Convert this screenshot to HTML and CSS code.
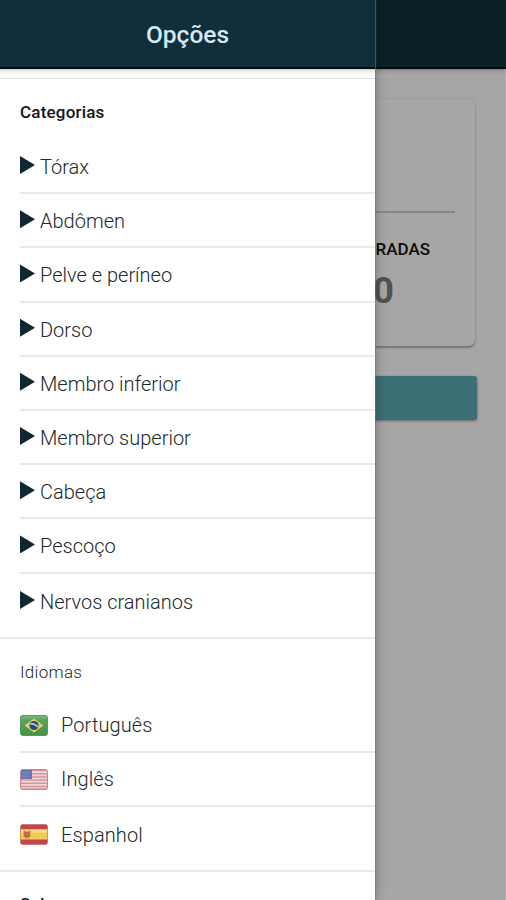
FILE: index.html
```html
<!DOCTYPE html>
<html lang="pt">
<head>
<meta charset="utf-8">
<title>Opções</title>
<link rel="stylesheet" href="styles.css">
</head>
<body>
<div class="app">
  <main class="page">
    <div class="page-bar"></div>
    <section class="card">
      <div class="card-top"></div>
      <div class="score">
        <span class="score-label">ERRADAS</span>
        <span class="score-value">0</span>
      </div>
    </section>
    <div class="button"></div>
  </main>
  <aside class="drawer">
    <header class="drawer-bar">Opções</header>
    <div class="strip"></div>
    <section class="group categories">
      <h2 class="heading strong">Categorias</h2>
      <ul class="list">
        <li class="item"><i class="arrow"></i><span>Tórax</span></li>
        <li class="item"><i class="arrow"></i><span>Abdômen</span></li>
        <li class="item"><i class="arrow"></i><span>Pelve e períneo</span></li>
        <li class="item"><i class="arrow"></i><span>Dorso</span></li>
        <li class="item"><i class="arrow"></i><span>Membro inferior</span></li>
        <li class="item"><i class="arrow"></i><span>Membro superior</span></li>
        <li class="item"><i class="arrow"></i><span>Cabeça</span></li>
        <li class="item"><i class="arrow"></i><span>Pescoço</span></li>
        <li class="item"><i class="arrow"></i><span>Nervos cranianos</span></li>
      </ul>
    </section>
    <section class="group languages">
      <h2 class="heading">Idiomas</h2>
      <ul class="list">
        <li class="item">
          <svg class="flag" viewBox="0 0 28 21">
            <defs><linearGradient id="g" x1="0" y1="0" x2="0" y2="1"><stop offset="0" stop-color="#7fb780"/><stop offset=".25" stop-color="#58a25c"/><stop offset="1" stop-color="#45914b"/></linearGradient></defs>
            <rect x=".5" y=".5" width="27" height="20" rx="2" fill="url(#g)" stroke="#5b9a5e"/>
            <path d="M4.500 10.500L14 3.500l9.500 7L14 17.500z" fill="#e2d458"/>
            <circle cx="14" cy="10.500" r="4.600" fill="#294a7e"/>
            <path d="M10 8.800q4.500-.5 8 3.200" stroke="#c6d9e5" stroke-width="1.300" fill="none"/>
          </svg>
          <span>Português</span>
        </li>
        <li class="item">
          <svg class="flag" viewBox="0 0 28 21">
            <rect x=".5" y=".5" width="27" height="20" rx="2" fill="#efd8da"/>
            <path d="M1 1.500h26M1 4.700h26M1 7.900h26M1 11.100h26M1 14.300h26M1 17.500h26M1 20h26" stroke="#d9949a" stroke-width="1.500"/>
            <path d="M1 1h11v9H1z" fill="#6876b0"/>
            <path d="M2.500 3.500h8M2.500 5.700h8M2.500 7.900h8" stroke="#9ba9d1" stroke-width=".8" stroke-dasharray="1 1"/>
            <rect x=".5" y=".5" width="27" height="20" rx="2" fill="none" stroke="#c08a93"/>
          </svg>
          <span>Inglês</span>
        </li>
        <li class="item">
          <svg class="flag" viewBox="0 0 28 21">
            <rect x=".5" y=".5" width="27" height="20" rx="2" fill="#c4454d"/>
            <path d="M0 5.500h28v10H0z" fill="#f3cc55"/>
            <path d="M0 5.500h28v3H0z" fill="#f8dc83"/>
            <path d="M3.500 6.500h2v1h3v-1h2v7H9q0 1-2 1.200-2-.2-2-1.200H3.500z" fill="#cf8a4a"/>
            <circle cx="7" cy="10.300" r="2.600" fill="#b85a3e"/>
            <circle cx="7" cy="10.300" r="1" fill="#d49b72"/>
            <rect x=".5" y=".5" width="27" height="20" rx="2" fill="none" stroke="#a84247" stroke-opacity=".4"/>
          </svg>
          <span>Espanhol</span>
        </li>
      </ul>
    </section>
    <section class="group about">
      <h2 class="heading strong">Sobre</h2>
    </section>
  </aside>
</div>
</body>
</html>
```
FILE: styles.css
```css
* { box-sizing: border-box; }
body { margin: 0; font-family: Roboto, "Liberation Sans", sans-serif; }
.app { position: relative; width: 506px; height: 900px; overflow: hidden; background: #a6a6a6; }
.page { height: 900px; border-right: 1px solid #b3b3b3; }
.page-bar { height: 69px; width: 506px; background: #0b1f27; border-bottom: 2px solid #02090f; box-shadow: 0 1px 4px rgba(0,0,0,.3); }
.card { margin: 30px 30px 0 29px; height: 247px; padding: 0 20px; border-radius: 6px; background: #a6a6a6; box-shadow: 0 2px 2px rgba(0,0,0,.28), 0 0 3px rgba(0,0,0,.1); }
.card-top { height: 114px; border-bottom: 2px solid #858585; }
.score { display: flex; flex-direction: column; align-items: flex-end; padding-top: 25px; }
.score-label { margin-right: 25px; font-size: 17px; line-height: 22px; font-weight: 500; color: #0c0c0c; }
.score-value { margin: 10px 61px 0 0; font-size: 37px; line-height: 42px; font-weight: 700; color: #515151; }
.button { margin: 30px 28px 0; height: 44px; border-radius: 3px; background: #3d6f76; box-shadow: 0 1px 3px rgba(0,0,0,.4); }
.drawer { position: absolute; left: 0; top: 0; width: 375px; height: 900px; overflow: hidden; background: #fff; box-shadow: 0 0 1px 1px rgba(110,120,122,.6), 2px 0 10px rgba(0,0,0,.22); color: #20282b; }
.drawer-bar { height: 69px; padding-top: 1px; background: #112f3b; border-bottom: 2px solid #02090f; color: #d8e8f3; text-align: center; font-size: 24.5px; line-height: 68px; font-weight: 500; }
.strip { height: 10px; border-bottom: 1px solid #dedede; background: linear-gradient(#d2d2d2, #f5f5f5 3px, #fff 8px); }
.group { padding-left: 20px; border-bottom: 2px solid #e9e9e9; }
.heading { margin: 0; height: 61px; padding-top: 22px; font-size: 17px; line-height: 22px; font-weight: 300; letter-spacing: .3px; }
.strong { font-weight: 500; letter-spacing: .2px; color: #151515; }
.list { margin: 0; padding: 0; list-style: none; }
.item { display: flex; align-items: center; height: 54.2px; padding-top: 2px; border-bottom: 2px solid #e9e9e9; font-size: 20px; line-height: 24px; font-weight: 300; }
.item:last-child { border: 0; padding-top: 3px; }
.arrow { width: 15px; height: 18px; margin: -4px 5px 0 0; background: #102630; clip-path: polygon(0 0, 100% 50%, 0 100%); }
.categories { height: 560px; }
.languages { height: 233px; }
.languages .heading { height: 60px; }
.languages .item { padding-top: 0; letter-spacing: .1px; }
.languages .item:last-child { padding-top: 1px; }
.about .heading { padding-top: 21px; }
.flag { width: 28px; height: 21px; margin: 0 13px 0 0; }
```
